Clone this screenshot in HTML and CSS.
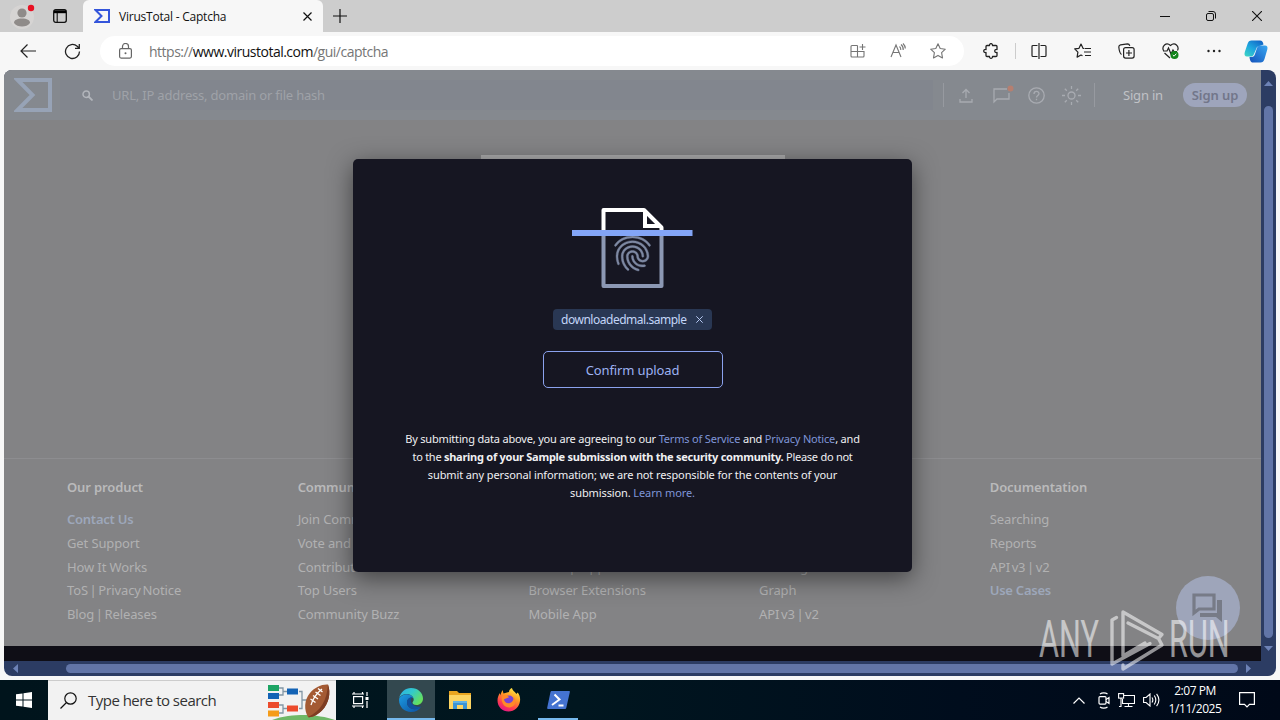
FILE: index.html
```html
<!DOCTYPE html>
<html lang="en">
<head>
  <meta charset="UTF-8">
  <meta name="viewport" content="width=device-width, initial-scale=1.0">
  <title>VirusTotal - Captcha</title>
  <link rel="stylesheet" href="styles.css">
</head>
<body>
  <div class="browser">
    <div class="tab-bar">
      <div class="profile">
        <svg width="44" height="32" viewBox="0 0 44 32"><circle cx="22" cy="17" r="12" fill="#d6d4d3"/><circle cx="22" cy="13" r="4.6" fill="#8f8b89"/><path d="M14 23c0-3 3-4.500 8-4.500s8 1.500 8 4.500c-1.500 2.500-5 3.500-8 3.500s-6.500-1-8-3.500z" fill="#8f8b89"/><circle cx="31" cy="8" r="3.200" fill="#e81123"/></svg>
      </div>
      <svg class="workspaces" width="14" height="14" viewBox="0 0 14 14"><rect x=".7" y=".7" width="12.600" height="12.600" rx="2" fill="none" stroke="#111" stroke-width="1.300"/><path d="M4.200 4v9" fill="none" stroke="#111" stroke-width="1.100"/><path d="M1 1.300h12v2.900H1z"/></svg>
      <div class="tab">
        <svg width="16" height="14" viewBox="0 0 16 14"><path d="M1.500 1h13.500v12H1.500L7.500 7z" fill="none" stroke="#3455db" stroke-width="2"/></svg>
        <span class="tab-title">VirusTotal - Captcha</span>
        <svg class="tab-close" width="9" height="9" viewBox="0 0 9 9"><path d="M.5.5l8 8M8.500.5l-8 8" stroke="#111" stroke-width="1.200"/></svg>
      </div>
      <svg class="new-tab" width="14" height="14" viewBox="0 0 14 14"><path d="M7 0v14M0 7h14" stroke="#111" stroke-width="1.200"/></svg>
      <div class="window-buttons">
        <svg width="10" height="10" viewBox="0 0 10 10"><path d="M0 5.500h10" stroke="#111"/></svg>
        <svg width="10" height="10" viewBox="0 0 10 10"><rect x=".5" y="2.500" width="7" height="7" rx="1.500" fill="none" stroke="#111"/><path d="M2.500.5H7A2.500 2.500 0 0 1 9.500 3v4.500" fill="none" stroke="#111"/></svg>
        <svg width="10" height="10" viewBox="0 0 10 10"><path d="M0 0l10 10M10 0L0 10" stroke="#111" stroke-width="1.100"/></svg>
      </div>
    </div>

    <div class="toolbar">
      <svg class="back" width="16" height="14" viewBox="0 0 16 14"><path d="M16 7H1M7.500.5L1 7l6.500 6.500" fill="none" stroke="#222" stroke-width="1.200"/></svg>
      <svg class="reload" width="17" height="17" viewBox="0 0 17 17"><path d="M15.500 8.500a7 7 0 1 1-2.300-5.200L15 5M15.300 1v4.300H11" fill="none" stroke="#222" stroke-width="1.300"/></svg>
      <div class="address">
        <svg class="lock" width="13" height="16" viewBox="0 0 13 16"><rect x=".6" y="5.600" width="11.800" height="9.500" rx="1.500" fill="none" stroke="#666" stroke-width="1.200"/><path d="M3.500 5.500V3.500a3 3 0 0 1 6 0v2" fill="none" stroke="#666" stroke-width="1.200"/><circle cx="6.500" cy="10.300" r="1" fill="#666"/></svg>
        <span class="url">https://<b>www.virustotal.com</b>/gui/captcha</span>
        <div class="address-icons">
          <svg width="16" height="16" viewBox="0 0 16 16" fill="none" stroke="#757575" stroke-width="1.100"><path d="M7.500 2.500H2a1 1 0 0 0-1 1v9.500a1 1 0 0 0 1 1h11a1 1 0 0 0 1-1V8.500H1M7.500 2.500V14M12.500 1v6M9.500 4h6"/></svg>
          <svg width="16" height="16" viewBox="0 0 16 16" fill="none" stroke="#757575" stroke-width="1.100"><path d="M1 14L6 2l5 12M2.800 9.500h6.400M9.500 3.500c1 .8 1.400 2 1.300 3.500M11 1.500c1.800 1.500 2.500 3.300 2.200 5.500M13 .5c1.500 1.500 2.300 3 2.300 5"/></svg>
          <svg width="16" height="16" viewBox="0 0 16 16" fill="none" stroke="#757575" stroke-width="1.100" stroke-linejoin="round"><path d="M8 .8l2.200 4.700 5.100.7-3.700 3.500.9 5.200L8 12.400l-4.500 2.500.9-5.200L.7 6.200l5.100-.7z"/></svg>
        </div>
      </div>
      <div class="toolbar-icons">
        <svg width="16" height="16" viewBox="0 0 16 16" fill="none" stroke="#222" stroke-width="1.300" stroke-linejoin="round"><path d="M4 2.500h2.500c-.2-2.500 3.200-2.500 3 0H13a1 1 0 0 1 1 1v3c-3-.7-3 3.700 0 3v3a1 1 0 0 1-1 1H9.500c.2 2.400-3.200 2.400-3 0H4a1 1 0 0 1-1-1v-3c-3 .7-3-3.700 0-3v-3a1 1 0 0 1 1-1z"/></svg>
        <span class="toolbar-divider"></span>
        <svg width="16" height="16" viewBox="0 0 16 16" fill="none" stroke="#222" stroke-width="1.200"><path d="M6.500 2.500H2a1 1 0 0 0-1 1v9a1 1 0 0 0 1 1h4.500M9.500 2.500H14a1 1 0 0 1 1 1v9a1 1 0 0 1-1 1H9.500M8 0v16"/></svg>
        <svg width="17" height="16" viewBox="0 0 17 16" fill="none" stroke="#222" stroke-width="1.200" stroke-linejoin="round"><path d="M10.500 5.500L9 5.300 7 1 5 5.300l-4.300.6 3.200 3.200-.8 5L7 12l1.500.8M11 5.500h6M10 9h7M11 12.500h6"/></svg>
        <svg width="17" height="16" viewBox="0 0 17 16" fill="none" stroke="#222" stroke-width="1.200"><rect x="5.600" y="4.600" width="10.500" height="10.500" rx="2"/><path d="M10.900 7v6M8 10h6M3.500 11.500C2 10.500 1 6 .8 4c0-1.300.7-2 1.700-2.200l7-1c1.300 0 2 .8 2.300 2"/></svg>
        <svg width="18" height="16" viewBox="0 0 18 16" fill="none" stroke="#222" stroke-width="1.200"><path d="M1.500 7.500C-.5 3.500 4-1.500 8.500 2.500c4.500-4 9 1 7 5M1 8h4l1.500-3 2.500 6 2-4 1 1.500h3M2.500 10l5.500 5"/><circle cx="12.500" cy="12" r="4" fill="#13841b" stroke="none"/><path d="M10.800 12l1.300 1.200 2.200-2.500" stroke="#fff" stroke-width="1"/></svg>
        <svg width="14" height="16" viewBox="0 0 14 16" fill="#222"><circle cx="1.500" cy="8" r="1.200"/><circle cx="7" cy="8" r="1.200"/><circle cx="12.500" cy="8" r="1.200"/></svg>
        <svg class="copilot" width="24" height="23" viewBox="0 0 24 23">
          <defs>
            <linearGradient id="copilotLeft" x1="0" y1="1" x2=".8" y2="0"><stop offset="0" stop-color="#3ed7c2"/><stop offset=".5" stop-color="#1fa7df"/><stop offset="1" stop-color="#1267c7"/></linearGradient>
            <linearGradient id="copilotRight" x1="0" y1="1" x2="1" y2="0"><stop offset="0" stop-color="#1451ba"/><stop offset="1" stop-color="#39a8f2"/></linearGradient>
          </defs>
          <path d="M7.500.5H16c2 0 3 1.500 3.500 4L13 7l-3 7c-.7 2-2 2.500-3.500 2.500H3C.8 16.500 0 14.800.8 12L3.500 4C4.200 1.500 5.500.5 7.500.5z" fill="url(#copilotLeft)"/>
          <path d="M16.500 22.500H9c-2 0-3-1.500-3.500-5.500h2c2 0 3-1 3.500-3l2-6c.7-2 2-2.500 4-2.500h4c2 0 3 1.500 2.300 4L20.500 19c-.7 2.500-2 3.500-4 3.500z" fill="url(#copilotRight)"/>
        </svg>
      </div>
    </div>

    <div class="viewport">
      <div class="page">
        <div class="vt-header">
          <svg class="vt-logo" width="38" height="34" viewBox="0 0 38 34"><path d="M3.500 2H36v30H3.500L18.500 17z" fill="none" stroke="#97a3b6" stroke-width="4"/></svg>
          <div class="vt-search">
            <svg width="11" height="11" viewBox="0 0 11 11"><circle cx="4.200" cy="4.200" r="3.200" fill="none" stroke="#b2b5bb" stroke-width="1.500"/><path d="M6.500 6.500l4 4" stroke="#b2b5bb" stroke-width="1.800"/></svg>
            <span>URL, IP address, domain or file hash</span>
          </div>
          <div class="vt-icons">
            <svg width="14" height="15" viewBox="0 0 14 15"><path d="M7 10V1.500M3.500 5L7 1.500 10.500 5M1 11v3h12v-3"/></svg>
            <svg class="vt-message" width="22" height="20" viewBox="0 0 22 20"><path d="M15 4H2v13l3-3h12V8"/><circle cx="18.500" cy="3.500" r="3" fill="#b67f70" stroke="none"/></svg>
            <svg width="17" height="17" viewBox="0 0 17 17"><circle cx="8.500" cy="8.500" r="7.700"/><path d="M6 7c0-3.500 5-3.300 5-.5 0 1.800-2.500 2-2.500 4M8.500 11.700v1.500"/></svg>
            <svg width="19" height="19" viewBox="0 0 19 19"><circle cx="9.500" cy="9.500" r="3.500"/><path d="M9.500 0v3M9.500 16v3M0 9.500h3M16 9.500h3M2.800 2.800l2 2M14.200 14.200l2 2M16.200 2.800l-2 2M4.800 14.200l-2 2"/></svg>
          </div>
          <span class="sign-in">Sign in</span>
          <span class="sign-up">Sign up</span>
        </div>

        <div class="vt-body">
          <div class="captcha-box"></div>
        </div>

        <div class="vt-footer">
          <div class="footer-col">
            <h4>Our product</h4>
            <a class="highlight">Contact Us</a>
            <a>Get Support</a>
            <a>How It Works</a>
            <a class="pair">ToS | Privacy Notice</a>
            <a class="pair">Blog | Releases</a>
          </div>
          <div class="footer-col">
            <h4>Community</h4>
            <a>Join Community</a>
            <a>Vote and Comment</a>
            <a>Contributors</a>
            <a>Top Users</a>
            <a>Community Buzz</a>
          </div>
          <div class="footer-col">
            <h4></h4>
            <a>API Scripts</a>
            <a>YARA</a>
            <a>Desktop Apps</a>
            <a>Browser Extensions</a>
            <a>Mobile App</a>
          </div>
          <div class="footer-col">
            <h4></h4>
            <a>Get a demo</a>
            <a>Intelligence</a>
            <a>Hunting</a>
            <a>Graph</a>
            <a class="pair">API v3 | v2</a>
          </div>
          <div class="footer-col">
            <h4>Documentation</h4>
            <a>Searching</a>
            <a>Reports</a>
            <a class="pair">API v3 | v2</a>
            <a class="highlight">Use Cases</a>
          </div>
        </div>
        <div class="page-end"></div>

        <div class="chat-button">
          <svg width="32" height="30" viewBox="0 0 32 30"><path d="M2 2h20v14H7l-5 4z" fill="none" stroke="#777b87" stroke-width="3.200"/><path d="M25 7h5v22l-6-5H8v-4h17z" fill="#777b87"/></svg>
        </div>

        <div class="modal">
          <svg class="scan-file" width="121" height="84" viewBox="0 0 121 84">
            <path d="M31.500 26V5H72L89.500 22.500V26" fill="none" stroke="#fff" stroke-width="4" stroke-linejoin="round"/>
            <path d="M73 5V21h16" fill="none" stroke="#fff" stroke-width="4"/>
            <path d="M31.500 29v52h58V29" fill="none" stroke="#8c98b4" stroke-width="4" stroke-linejoin="round"/>
            <svg x="36.5" y="22" width="48" height="48" viewBox="0 0 24 24"><path fill="#7e89a3" stroke="#7e89a3" stroke-width=".2" d="M17.810 4.470c-.08 0-.16-.02-.23-.06C15.660 3.420 14 3 12.010 3c-1.980 0-3.860.47-5.570 1.410-.24.13-.54.04-.68-.2-.13-.24-.04-.55.2-.68C7.820 2.520 9.860 2 12.010 2c2.130 0 3.990.47 6.030 1.520.25.13.34.43.21.67-.09.18-.26.28-.44.28zM3.500 9.720c-.1 0-.2-.03-.29-.09-.23-.16-.28-.47-.12-.7.99-1.400 2.250-2.500 3.750-3.270C9.980 4.040 14 4.030 17.150 5.650c1.500.77 2.760 1.860 3.750 3.250.16.22.11.54-.12.7-.23.16-.54.11-.7-.12-.9-1.260-2.040-2.250-3.390-2.940-2.870-1.470-6.540-1.470-9.400.01-1.360.7-2.500 1.700-3.400 2.960-.08.14-.23.21-.39.21zm6.250 12.070c-.13 0-.26-.05-.35-.15-.87-.87-1.340-1.430-2.010-2.640-.69-1.230-1.050-2.730-1.050-4.340 0-2.970 2.540-5.390 5.660-5.390s5.660 2.420 5.660 5.390c0 .28-.22.5-.5.5s-.5-.22-.5-.5c0-2.420-2.090-4.390-4.660-4.390-2.570 0-4.660 1.970-4.660 4.390 0 1.440.32 2.770.93 3.850.64 1.150 1.080 1.640 1.850 2.420.19.2.19.51 0 .71-.11.1-.24.15-.37.15zm7.170-1.850c-1.190 0-2.240-.3-3.100-.89-1.490-1.010-2.380-2.650-2.380-4.390 0-.28.22-.5.5-.5s.5.22.5.5c0 1.410.72 2.740 1.940 3.560.71.48 1.540.71 2.540.71.24 0 .64-.03 1.040-.1.27-.05.53.13.58.41.05.27-.13.53-.41.58-.57.11-1.070.12-1.210.12zM14.910 22c-.04 0-.09-.01-.13-.02-1.590-.44-2.630-1.030-3.720-2.100-1.400-1.390-2.170-3.240-2.170-5.220 0-1.620 1.380-2.940 3.080-2.940 1.700 0 3.080 1.320 3.080 2.940 0 1.070.93 1.940 2.080 1.940s2.080-.87 2.080-1.940c0-3.770-3.250-6.830-7.250-6.830-2.840 0-5.440 1.580-6.610 4.030-.39.81-.59 1.760-.59 2.800 0 .78.07 2.010.67 3.610.1.26-.03.55-.29.64-.26.1-.55-.04-.64-.29-.49-1.310-.73-2.610-.73-3.960 0-1.200.23-2.290.68-3.240 1.330-2.790 4.280-4.600 7.510-4.600 4.550 0 8.250 3.510 8.250 7.830 0 1.620-1.380 2.940-3.080 2.940s-3.080-1.320-3.080-2.940c0-1.070-.93-1.940-2.080-1.940s-2.080.87-2.080 1.940c0 1.710.66 3.310 1.870 4.510.95.94 1.860 1.460 3.270 1.850.27.07.42.35.35.61-.05.23-.26.38-.47.38z"/></svg>
            <path d="M0 25h120.500v6H0z" fill="#83a5f7"/>
          </svg>
          <div class="file-chip">
            <span>downloadedmal.sample</span>
            <svg width="7" height="7" viewBox="0 0 7 7"><path d="M.3.3l6.400 6.400M6.700.3L.3 6.700" stroke="#b5c7f0" stroke-width="1"/></svg>
          </div>
          <button class="confirm">Confirm upload</button>
          <p class="terms">
            <span class="line line-1">By submitting data above, you are agreeing to our <a>Terms of Service</a> and <a>Privacy Notice</a>, and</span>
            <span class="line line-2">to the <b>sharing of your Sample submission with the security community.</b> Please do not</span>
            <span class="line line-3">submit any personal information; we are not responsible for the contents of your</span>
            <span class="line line-4">submission. <a>Learn more.</a></span>
          </p>
        </div>
      </div>

      <div class="scroll-y">
        <svg width="9" height="5" viewBox="0 0 9 5"><path d="M0 5l4.500-5L9 5z" fill="#6d82b6"/></svg>
        <div class="thumb-y"></div>
        <svg width="9" height="5" viewBox="0 0 9 5"><path d="M0 0l4.500 5L9 0z" fill="#6d82b6"/></svg>
      </div>
      <div class="scroll-x">
        <svg width="5" height="9" viewBox="0 0 5 9"><path d="M5 0L0 4.500 5 9z" fill="#6d82b6"/></svg>
        <div class="thumb-x"></div>
        <svg width="5" height="9" viewBox="0 0 5 9"><path d="M0 0l5 4.500L0 9z" fill="#6d82b6"/></svg>
      </div>
    </div>
  </div>

  <div class="taskbar">
    <div class="start">
      <svg width="16" height="16" viewBox="0 0 16 16" fill="#fff"><path d="M0 2.300L6.500 1.400v6.100H0zM7.500 1.200L16 0v7.500H7.500zM0 8.500h6.500v6.100L0 13.700zM7.500 8.500H16V16l-8.500-1.200z"/></svg>
    </div>
    <div class="task-search">
      <svg width="17" height="17" viewBox="0 0 17 17"><circle cx="10.500" cy="6.500" r="5.700" fill="none" stroke="#111" stroke-width="1.200"/><path d="M6.500 10.500L.5 16.500" stroke="#111" stroke-width="1.300"/></svg>
      <span>Type here to search</span>
      <svg class="football" width="68" height="38" viewBox="0 0 68 38">
        <path d="M11 6h4v7h-4M15 9.500h5M31 9.500h3v17h-3M34 18h5M11 23h4v8h-4M15 26.500h5" fill="none" stroke="#8296a5" stroke-width="1.300"/>
        <path d="M0 3h11v6H0z" fill="#1ca463"/><path d="M0 11h11v6H0z" fill="#1363b5"/><path d="M19 6.500h11v6H19z" fill="#1363b5"/>
        <path d="M0 20h11v6H0z" fill="#ec4b2c"/><path d="M19 23.500h11v6H19z" fill="#ec4b2c"/><path d="M0 28.500h11v6H0z" fill="#f59c18"/>
        <path d="M4 38c10-4 22-5 32-5s23 2 31 5z" fill="#6fb866"/>
        <path d="M60 2.500c3 8 1 19-6 26-5 5-11 7.500-14 6.500-4-7-4-17 2-24 5-6 12-9 18-8.500z" fill="#a45a33"/>
        <path d="M60 2.500c3 8 1 19-6 26-5 5-11 7.500-14 6.500C53 29 59 18 60 2.500z" fill="#7e3d22"/>
        <path d="M54 7C49 11 45 16 43 23M50 6.500l4.500 3.500M47.500 10l5 3.500M45 13.500l5 3.500M42.500 17l5 3.500" stroke="#fff" stroke-width="1.300" fill="none"/>
      </svg>
    </div>
    <div class="task-item">
      <svg width="17" height="16" viewBox="0 0 17 16" fill="none" stroke="#fff" stroke-width="1.200"><rect x="1.600" y="4.600" width="9" height="7"/><path d="M0 2h12M2 0v2M10.500 0v2M0 14h12M2 14v2M10.500 14v2M15 0v4M15 9v7"/><path d="M13.500 5h3v3h-3z" fill="#fff" stroke="none"/></svg>
    </div>
    <div class="task-item active running">
      <svg width="24" height="24" viewBox="0 0 24 24">
        <defs>
          <linearGradient id="edgeTop" x1="0" y1="0" x2="1" y2=".6"><stop offset="0" stop-color="#2caee8"/><stop offset=".5" stop-color="#32c9cc"/><stop offset="1" stop-color="#66e05c"/></linearGradient>
          <linearGradient id="edgeLow" x1="0" y1="0" x2="1" y2="1"><stop offset="0" stop-color="#1c9de3"/><stop offset="1" stop-color="#0d4f9f"/></linearGradient>
        </defs>
        <path d="M.3 10C1.500 4 6.500 0 12 0c7 0 12 5 12 10.500 0 4-3 6.500-6.500 6.500-3 0-4-1.300-4-2.200 0-.8 1.200-1.400 1.200-3.300C14.700 8.500 11.500 6 8 6 4.500 6 1.500 7.500.3 10z" fill="url(#edgeTop)"/>
        <path d="M.3 10C2 7.500 5 6.200 8 6.200c3 0 5.500 1.600 6.400 4C10.500 8.500 8 11.500 8 14.500c0 4.500 4.500 7.500 9 6.500 2-.5 3.800-1.300 5-2.300C20 22 16.500 24 12 24 5.500 24 0 19 0 12z" fill="url(#edgeLow)"/>
        <path d="M8 14.500c0-3 2-5.500 5.500-5.200C10 12 12 17 17.500 18.500c2 .5 3.500.2 4.800-.3-1.500 2-4 3-6.300 3-4.500 0-8-2.700-8-6.700z" fill="#11509d"/>
      </svg>
    </div>
    <div class="task-item">
      <svg width="22" height="20" viewBox="0 0 22 20"><path d="M0 1h8l2 2h12v16H0z" fill="#e9a520"/><path d="M0 5h22v14H0z" fill="#fcd462"/><path d="M4 11h14v8h-4v-4H8v4H4z" fill="#3c94d4"/><path d="M4 11h14v2H4z" fill="#61b2e4"/></svg>
    </div>
    <div class="task-item">
      <svg width="24" height="24" viewBox="0 0 24 24">
        <defs><linearGradient id="fox" x1=".8" y1="0" x2=".3" y2="1"><stop offset="0" stop-color="#fff14a"/><stop offset=".4" stop-color="#ff9a24"/><stop offset=".75" stop-color="#ff3b50"/><stop offset="1" stop-color="#e31587"/></linearGradient></defs>
        <path d="M12 4c0-2 1.500-3.500 3-4 .5 3 3 3.500 4.500 6l1-1.500c2 2 3 5 2.500 8.500-.7 6-5.500 10.500-11.500 10.500C5.500 23.500.5 19 .5 12.500c0-3 1-5.500 2.500-7.500v2.500L5.500 2l1 3.500C8 5 10 4.500 12 4z" fill="url(#fox)"/>
        <circle cx="12" cy="12.500" r="5" fill="#7743d5"/>
        <path d="M5 8c3-1.500 6-.5 7 1.500-2 0-3 1.500-5 1.500 0 3 3 5 6 4 2.500-1 4-3 3.500-6.500 3 4 2.500 10-3.500 11C7 20 3.500 14 5 8z" fill="#ff8a28"/>
      </svg>
    </div>
    <div class="task-item running-short">
      <svg width="23" height="18" viewBox="0 0 23 18"><path d="M4.500 0H22c.7 0 1 .5.8 1.200l-3.500 15.600c-.2.800-.7 1.200-1.500 1.200H1c-.8 0-1-.5-.8-1.200L3.500 1c.2-.7.500-1 1-1z" fill="#4473d1"/><path d="M7.500 3.500l5 5-7.500 5.500M11.500 14.500h5" fill="none" stroke="#fff" stroke-width="2"/></svg>
    </div>
    <div class="tray">
      <svg width="12" height="7" viewBox="0 0 12 7"><path d="M.5 6.500L6 1l5.500 5.500" fill="none" stroke="#fff" stroke-width="1.200"/></svg>
      <svg width="12" height="17" viewBox="0 0 12 17" fill="none" stroke="#fff" stroke-width="1.200"><rect x="1" y="4.600" width="7" height="7.500" rx="1"/><path d="M8 7.500l3-2v6l-3-2M2 2c2-1.500 5.500-1.500 7.500 0M2 15c2 1.500 5.500 1.500 7.500 0"/></svg>
      <svg width="17" height="14" viewBox="0 0 17 14" fill="none" stroke="#fff" stroke-width="1.100"><path d="M6 2.500h10.500v8H4.500V6M10.500 10.500v3M6.500 13.500h8"/><rect x=".6" y=".6" width="5" height="4.500"/><path d="M3 5v8.500H1"/></svg>
      <svg width="17" height="14" viewBox="0 0 17 14" fill="none" stroke="#fff" stroke-width="1.100"><path d="M.6 4.500h2.500L7 1v12L3.100 9.500H.6zM9 4.500c1 1.500 1 3.500 0 5M11.300 2.500c2 3 2 6 0 9M13.600.8c3 4 3 8.400 0 12.400"/></svg>
      <div class="clock"><span>2:07 PM</span><span>1/11/2025</span></div>
      <svg class="notice" width="16" height="16" viewBox="0 0 16 16"><path d="M.6.6h14.800v11.800h-4.900L8 15l-2.500-2.600H.6z" fill="none" stroke="#fff" stroke-width="1.200"/></svg>
    </div>
  </div>

  <div class="watermark">
    <span class="wm-text">ANY</span>
    <svg width="56" height="62" viewBox="0 0 56 62" fill="none" stroke="#fff" stroke-width="3.400" stroke-linejoin="round" stroke-linecap="round"><path d="M7.500 8.500L3 11v44l38-20.500M14 47V3l39 22.500-3.500 4L19 14M14 47l22-13M14 56v4l39-24-3.500-6.500"/></svg>
    <span class="wm-text">RUN</span>
  </div>
</body>
</html>
```
FILE: styles.css
```css
body, html {
  margin: 0;
  padding: 0;
  height: 100%;
  overflow: hidden;
  font-family: "Open Sans", "Noto Sans", sans-serif;
}

body {
  width: 1280px;
  height: 720px;
  position: relative;
}

svg {
  display: block;
  flex-shrink: 0;
}

.browser {
  height: 680px;
  display: flex;
  flex-direction: column;
  background: #f7f7f7;
}

/* Tabs */
.tab-bar {
  height: 32px;
  display: flex;
  align-items: center;
  background: #cdcdcd;
}

.workspaces {
  margin-left: 9px;
}

.tab {
  width: 240px;
  height: 32px;
  margin-left: 16px;
  display: flex;
  align-items: center;
  background: #f7f7f7;
  border-radius: 6px 6px 0 0;
  box-sizing: border-box;
  padding-left: 11px;
}

.tab-title {
  margin-left: 9px;
  width: 184px;
  font-size: 12px;
  letter-spacing: -0.22px;
  color: #111;
}

.new-tab {
  margin-left: 10px;
}

.window-buttons {
  margin-left: auto;
  margin-right: 18px;
  display: flex;
  gap: 36px;
}

/* Toolbar */
.toolbar {
  height: 38px;
  display: flex;
  align-items: center;
}

.back {
  margin-left: 20px;
}

.reload {
  margin-left: 28px;
}

.address {
  width: 864px;
  height: 30px;
  margin-left: 19px;
  display: flex;
  align-items: center;
  background: #fff;
  border-radius: 15px;
}

.lock {
  margin-left: 19px;
}

.url {
  margin-left: 17px;
  font-size: 14px;
  letter-spacing: -0.5px;
  color: #767676;
}

.url b {
  font-weight: normal;
  color: #111;
}

.address-icons {
  margin-left: auto;
  margin-right: 18px;
  display: flex;
  gap: 24px;
}

.toolbar-icons {
  margin-left: 19px;
  display: flex;
  align-items: center;
  gap: 27px;
}

.toolbar-divider {
  width: 1px;
  height: 16px;
  margin: 0 -12px 0 -11px;
  background: #ccc;
}

.copilot {
  margin-left: -4px;
}

/* Page area */
.viewport {
  width: 1272px;
  height: 606px;
  margin-left: 4px;
  display: grid;
  grid-template-columns: 1257px 15px;
  grid-template-rows: 591px 15px;
  border-radius: 8px;
  overflow: hidden;
  background: #2c3c63;
}

.page {
  position: relative;
  overflow: hidden;
  background: #838385;
  font-family: "Noto Sans", sans-serif;
  color: #b1b1b2;
}

.vt-header {
  height: 50px;
  display: flex;
  align-items: center;
  background: #85898f;
}

.vt-logo {
  margin-left: 10px;
}

.vt-search {
  width: 873px;
  height: 30px;
  margin-left: 8px;
  box-sizing: border-box;
  padding-left: 22px;
  display: flex;
  align-items: center;
  gap: 19px;
  font-size: 13px;
  letter-spacing: -0.2px;
  color: #9fa2a8;
  background: #82868e;
}

.vt-icons {
  height: 24px;
  margin-left: 10px;
  padding: 0 13px 0 15px;
  display: flex;
  align-items: center;
  border-left: 1px solid #979aa0;
  border-right: 1px solid #979aa0;
  fill: none;
  stroke: #a8abb1;
  stroke-width: 1.3;
}

.vt-icons svg + svg {
  margin-left: 17px;
}

.vt-icons .vt-message {
  margin-left: 19px;
}

.vt-icons .vt-message + svg {
  margin-left: 14px;
}

.sign-in {
  margin-left: 28px;
  width: 60px;
  font-size: 13px;
  letter-spacing: -0.2px;
  color: #c0c2c6;
}

.sign-up {
  width: 64px;
  height: 24px;
  line-height: 24px;
  text-align: center;
  font-size: 13px;
  letter-spacing: -0.1px;
  font-weight: 600;
  color: #72768a;
  background: #9ea5bc;
  border-radius: 12px;
}

.vt-body {
  height: 338px;
}

.captcha-box {
  width: 304px;
  height: 76px;
  margin: 0 0 0 477px;
  position: relative;
  top: 35px;
  background: #a9a9aa;
}

.vt-footer {
  height: 188px;
  padding: 0 0 0 63px;
  display: grid;
  grid-template-columns: repeat(5, 230.7px);
  box-sizing: border-box;
  border-top: 1px solid #8d8d90;
}

.footer-col {
  padding-top: 16px;
  font-size: 13px;
  letter-spacing: -0.12px;
  white-space: nowrap;
}

.footer-col h4 {
  height: 24px;
  margin: 0 0 9px;
  font-size: 13px;
  line-height: 24px;
  font-weight: 600;
  color: #bababb;
}

.footer-col a {
  display: block;
  line-height: 23.8px;
}

.footer-col .pair {
  word-spacing: -1.6px;
}

.footer-col .highlight {
  font-weight: 600;
  letter-spacing: -0.25px;
  color: #9da7ba;
}

.page-end {
  height: 15px;
  background: #0f0e16;
}

.chat-button {
  position: absolute;
  left: 1172px;
  top: 506px;
  width: 64px;
  height: 64px;
  display: flex;
  align-items: center;
  justify-content: center;
  background: #9ea5ba;
  border-radius: 50%;
}

/* Upload dialog */
.modal {
  position: absolute;
  left: 349px;
  top: 89px;
  width: 559px;
  height: 413px;
  display: flex;
  flex-direction: column;
  align-items: center;
  background: #161622;
  border-radius: 5px;
  box-shadow: 0 6px 24px rgba(0, 0, 0, 0.5);
}

.scan-file {
  margin-top: 46px;
}

.file-chip {
  width: 159px;
  height: 21px;
  margin-top: 20px;
  box-sizing: border-box;
  padding: 0 9px 0 8px;
  display: flex;
  align-items: center;
  justify-content: space-between;
  font-size: 12px;
  letter-spacing: -0.48px;
  color: #c3d5f8;
  background: #293753;
  border-radius: 4px;
}

.confirm {
  width: 180px;
  height: 37px;
  margin-top: 21px;
  background: none;
  border: 1px solid #8ba2ee;
  border-radius: 5px;
  font-family: inherit;
  font-size: 13px;
  letter-spacing: -0.12px;
  color: #9db2f2;
}

.terms {
  margin: 42px 0 0;
  font-size: 11px;
  line-height: 18px;
  text-align: center;
  color: #f0f0f2;
  white-space: nowrap;
}

.terms .line {
  display: block;
}

.line-1 {
  letter-spacing: -0.18px;
}

.line-2 {
  letter-spacing: -0.26px;
}

.line-3, .line-4 {
  letter-spacing: -0.11px;
}

.terms a {
  color: #7f95d8;
}

/* Scrollbars */
.scroll-y {
  display: flex;
  flex-direction: column;
  align-items: center;
  padding-top: 11px;
}

.thumb-y {
  width: 9px;
  height: 532px;
  margin: 20px 0 8px;
  flex-shrink: 0;
  border-radius: 5px;
  background: #6275a7;
}

.scroll-x {
  display: flex;
  align-items: center;
  padding-left: 9px;
}

.thumb-x {
  width: 1172px;
  height: 9px;
  margin: 0 8px 0 48px;
  flex-shrink: 0;
  border-radius: 5px;
  background: #6275a7;
}

/* Taskbar */
.taskbar {
  height: 40px;
  display: flex;
  background: linear-gradient(90deg, #00141c 0, #00161f 45%, #000d1d 75%, #000918 100%);
}

.start {
  width: 48px;
  display: flex;
  align-items: center;
  justify-content: center;
}

.task-search {
  width: 288px;
  box-sizing: border-box;
  padding-left: 12px;
  display: flex;
  align-items: center;
  border-top: 1px solid #ccc;
  background: #f2f2f2;
  font-size: 15px;
  color: #333;
}

.task-search span {
  width: 180px;
  margin: 0 0 1px 11px;
  letter-spacing: -0.52px;
}

.football {
  align-self: flex-end;
}

.task-item {
  width: 48px;
  margin-right: 1px;
  display: flex;
  align-items: center;
  justify-content: center;
}

.active {
  margin-left: 2px;
  background: #33484f;
}

.running {
  box-shadow: inset 0 -2px #76b9ed;
}

.running-short {
  background: linear-gradient(#76b9ed, #76b9ed) center bottom / 40px 2px no-repeat;
}

.tray {
  margin-left: auto;
  display: flex;
  align-items: center;
  gap: 8px;
  padding-right: 25px;
}

.tray > svg:first-child {
  margin-right: 5px;
}

.clock {
  width: 62px;
  margin-left: -4px;
  display: flex;
  flex-direction: column;
  align-items: center;
  font-size: 12px;
  line-height: 18px;
  letter-spacing: -0.45px;
  color: #fff;
}

.notice {
  margin-left: 5px;
}

.watermark {
  position: absolute;
  left: 1039px;
  top: 609px;
  display: flex;
  align-items: center;
  opacity: 0.55;
}

.wm-text {
  width: 60px;
  font-family: Roboto, sans-serif;
  font-size: 52px;
  font-weight: 400;
  line-height: 62px;
  color: #fff;
  transform: scaleX(0.59);
  transform-origin: left;
}

.watermark svg {
  margin: 0 4px 0 10px;
}
```
